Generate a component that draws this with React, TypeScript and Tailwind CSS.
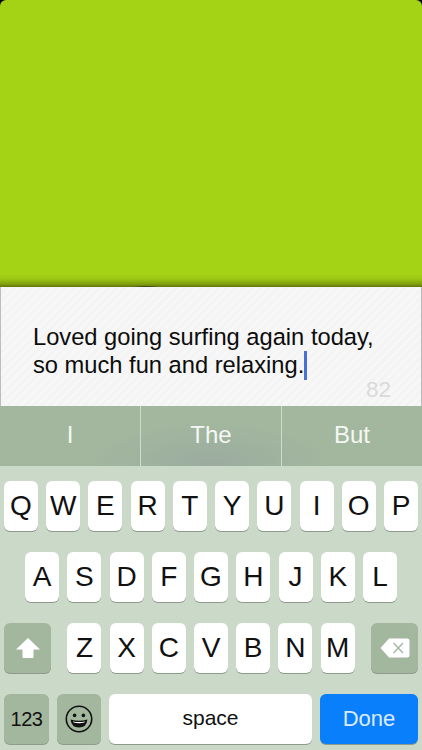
import { Fragment } from "react"

const rowOne = ["Q", "W", "E", "R", "T", "Y", "U", "I", "O", "P"]
const rowTwo = ["A", "S", "D", "F", "G", "H", "J", "K", "L"]
const rowThree = ["Z", "X", "C", "V", "B", "N", "M"]
const suggestions = ["I", "The", "But"]

function LetterKey({ label }: { label: string }) {
  return (
    <div className="flex h-[50px] w-[34px] shrink-0 items-center justify-center rounded-[6px] bg-white text-[28px] text-[#111] shadow-[0_1px_0_#8d9a8c]">
      {label}
    </div>
  )
}

function ShiftIcon() {
  return (
    <svg width="26" height="24" viewBox="0 0 26 24">
      <path d="M13 2 L25 13.5 H18.5 V21 Q18.5 22 17.5 22 H8.5 Q7.5 22 7.5 21 V13.5 H1 Z" fill="#fff" />
    </svg>
  )
}

function DeleteIcon() {
  return (
    <svg width="30" height="20" viewBox="0 0 30 20">
      <path d="M9 0.5 H27 Q29.5 0.5 29.5 3 V17 Q29.5 19.5 27 19.5 H9 L0.5 10 Z" fill="#fff" />
      <path d="M13.5 5 L23 15 M23 5 L13.5 15" stroke="#a3b5a0" strokeWidth="1.3" fill="none" />
    </svg>
  )
}

function EmojiIcon() {
  return (
    <svg width="28" height="28" viewBox="0 0 28 28">
      <circle cx="14" cy="14" r="12.7" fill="none" stroke="#111" strokeWidth="1.6" />
      <circle cx="9.6" cy="10.4" r="1.8" fill="#111" />
      <circle cx="18.4" cy="10.4" r="1.8" fill="#111" />
      <path d="M5.6 14.6 Q14 17 22.4 14.6 Q21.6 22.6 14 22.6 Q6.4 22.6 5.6 14.6 Z" fill="#111" />
      <path d="M7.8 16.4 Q14 17.8 20.2 16.4 Q19.6 18 14 18.2 Q8.4 18 7.8 16.4 Z" fill="#fff" />
    </svg>
  )
}

export default function App() {
  return (
    <div className="flex h-[750px] w-[422px] flex-col overflow-hidden bg-black font-['Liberation_Sans',Arial,sans-serif]">
      {/* Colour area */}
      <div className="relative h-[287px] shrink-0 overflow-hidden rounded-t-[6px] bg-[linear-gradient(to_bottom,#a4d215_0,#a4d215_274px,#9bc713_279px,#809f0f_284px,#5f760b_287px)]">
        {/* Thing peeking out from behind the panel */}
        <div className="absolute left-[134px] top-[285.5px] h-[3px] w-[24px] rounded-[50%] bg-[#3c4a14]" />
      </div>

      {/* Text panel */}
      <div className="relative h-[119px] shrink-0 border-x border-[#bdbdbd] bg-[repeating-linear-gradient(135deg,#f7f7f7_0,#f7f7f7_3px,#f4f4f4_3px,#f4f4f4_6px)] pl-[32px] pt-[37px]">
        <p className="text-[23.7px] leading-[27px] text-[#0c0c0c]">
          Loved going surfing again today,
          <br />
          so much fun and relaxing.
          <span className="inline-block h-[29px] w-[3px] bg-[#4a6fd8] align-[-7px]" />
        </p>
        <span className="absolute right-[30px] top-[89px] text-[22.5px] leading-[27px] text-[#dadada]">82</span>
      </div>

      {/* Suggestions */}
      <div className="flex h-[60px] shrink-0 bg-[radial-gradient(ellipse_120px_40px_at_50%_95%,#9bac9f_0,#a2b79e_100%)]">
        {suggestions.map((word, i) => (
          <Fragment key={word}>
            {i > 0 && <div className="w-px bg-[#d0dbcf]" />}
            <div className="flex flex-1 items-center justify-center pb-[2px] text-[24px] text-[#f4f7f3]">{word}</div>
          </Fragment>
        ))}
      </div>

      {/* Keyboard */}
      <div className="flex flex-1 flex-col gap-[21px] bg-[#cbd9c9] px-[4px] pt-[15px]">
        <div className="flex justify-between">
          {rowOne.map((k) => (
            <LetterKey key={k} label={k} />
          ))}
        </div>
        <div className="flex justify-between px-[21px]">
          {rowTwo.map((k) => (
            <LetterKey key={k} label={k} />
          ))}
        </div>
        <div className="flex items-center justify-between">
          <div className="flex h-[50px] w-[47px] items-center justify-center rounded-[6px] bg-[#a2b79e] shadow-[0_1px_0_#8d9a8c]">
            <ShiftIcon />
          </div>
          <div className="flex gap-[8.2px]">
            {rowThree.map((k) => (
              <LetterKey key={k} label={k} />
            ))}
          </div>
          <div className="flex h-[50px] w-[47px] items-center justify-center rounded-[6px] bg-[#a2b79e] shadow-[0_1px_0_#8d9a8c]">
            <DeleteIcon />
          </div>
        </div>
        <div className="flex gap-[8px]">
          <div className="flex h-[50px] w-[45px] items-center justify-center rounded-[6px] bg-[#a2b79e] text-[20px] tracking-[-0.5px] text-[#111] shadow-[0_1px_0_#8d9a8c]">
            123
          </div>
          <div className="flex h-[50px] w-[44px] items-center justify-center rounded-[6px] bg-[#a2b79e] shadow-[0_1px_0_#8d9a8c]">
            <EmojiIcon />
          </div>
          <div className="flex h-[50px] w-[203px] items-center justify-center rounded-[6px] bg-white pb-[2px] text-[21px] text-[#111] shadow-[0_1px_0_#8d9a8c]">
            space
          </div>
          <div className="flex h-[50px] w-[98px] items-center justify-center rounded-[6px] bg-[#0a7ffb] pb-[2px] text-[22px] text-[#dcecff] shadow-[0_1px_0_#8d9a8c]">
            Done
          </div>
        </div>
      </div>
    </div>
  )
}
